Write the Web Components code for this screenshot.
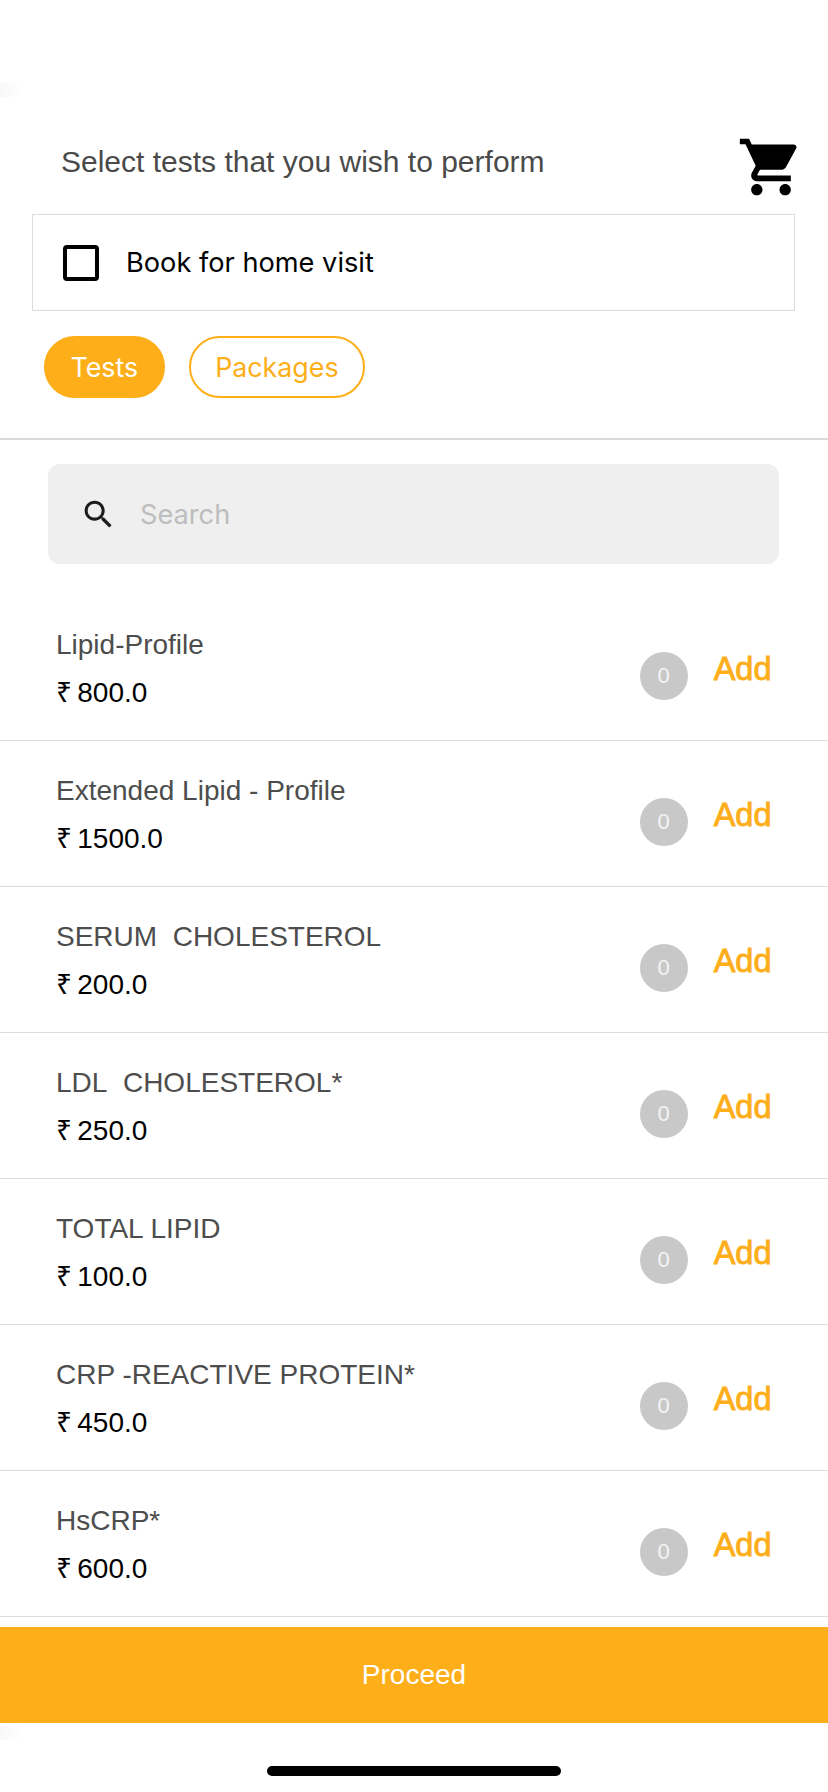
<!DOCTYPE html>
<html><head><meta charset="utf-8">
<style>
html,body{margin:0;padding:0;background:#fff}
body{width:828px;height:1792px;overflow:hidden;font-family:"Liberation Sans",Arial,sans-serif}
</style></head><body>
<app-screen>
  <select-header>Select tests that you wish to perform</select-header>
  <visit-check>Book for home visit</visit-check>
  <tab-bar>
    <tab-pill active>Tests</tab-pill>
    <tab-pill>Packages</tab-pill>
  </tab-bar>
  <search-box placeholder="Search"></search-box>
  <test-list>
    <test-row price="800.0">Lipid-Profile</test-row>
    <test-row price="1500.0">Extended Lipid - Profile</test-row>
    <test-row price="200.0">SERUM&nbsp; CHOLESTEROL</test-row>
    <test-row price="250.0">LDL&nbsp; CHOLESTEROL*</test-row>
    <test-row price="100.0">TOTAL LIPID</test-row>
    <test-row price="450.0">CRP -REACTIVE PROTEIN*</test-row>
    <test-row price="600.0">HsCRP*</test-row>
  </test-list>
  <proceed-bar>Proceed</proceed-bar>
</app-screen>
<script>
function def(name, css, html){
  customElements.define(name, class extends HTMLElement{
    constructor(){super();this.attachShadow({mode:'open'});}
    connectedCallback(){
      this.shadowRoot.innerHTML='<style>'+css+'</style>'+(typeof html==='function'?html(this):html);
    }
  });
}
def('app-screen',`
  :host{display:flex;flex-direction:column;width:828px;height:1792px;position:relative;background:#fff;overflow:hidden;padding-top:133px;box-sizing:border-box}
  .smudge{position:absolute;left:0;width:22px;height:14px;background:linear-gradient(90deg,#f8f8f8,#fff);border-radius:0 8px 8px 0}
  .a{top:83px}.b{top:1726px}
  .home{position:absolute;left:267px;top:1766px;width:294px;height:10px;border-radius:5px;background:#000}
`,`<div class="smudge a"></div><slot></slot><div class="smudge b"></div><div class="home"></div>`);

def('select-header',`
  :host{display:flex;align-items:center;justify-content:space-between;height:68px;padding:0 25px 0 61px;font-size:30px;color:#4a4a4a;margin-bottom:13px;box-sizing:border-box}
  .t{position:relative;top:-5.5px}
  svg{display:block;width:68px;height:68px;margin-right:-1.5px}
`,`<span class="t"><slot></slot></span>
<svg viewBox="0 0 24 24" aria-hidden="true"><path fill="#000" d="M7 18c-1.1 0-1.99.9-1.99 2S5.9 22 7 22s2-.9 2-2-.9-2-2-2zM1 2v2h2l3.6 7.59-1.35 2.45c-.16.28-.25.61-.25.96 0 1.1.9 2 2 2h12v-2H7.42c-.14 0-.25-.11-.25-.25l.03-.12.9-1.63h7.45c.75 0 1.41-.41 1.75-1.03l3.58-6.47c.08-.14.12-.31.12-.48 0-.55-.45-1-1-1H5.21l-.94-2H1zm16 16c-1.1 0-1.99.9-1.99 2s.89 2 1.99 2 2-.9 2-2-.9-2-2-2z"/></svg>`);

def('visit-check',`
  :host{display:flex;align-items:center;gap:27px;height:97px;margin:0 33px 0 32px;padding-left:30px;border:1.5px solid #dcdcdc;box-sizing:border-box;font-family:Inter,"Liberation Sans",sans-serif;font-size:27.2px;color:#000}
  .c{width:36px;height:36px;border:4px solid #000;border-radius:4px;box-sizing:border-box;flex:none}
`,`<span class="c"></span><span><slot></slot></span>`);

def('tab-bar',`
  :host{display:flex;gap:24px;padding:25px 0 40px 44px;border-bottom:2px solid #dadada;font-family:Inter,"Liberation Sans",sans-serif}
`,`<slot></slot>`);

def('tab-pill',`
  :host{display:flex;align-items:center;justify-content:center;height:62px;box-sizing:border-box;border-radius:31px;padding:0 24.5px;font-size:26.8px;color:#fdae19;border:2px solid #fdae19;background:#fff}
  :host([active]){background:#fdae19;color:#fff}
`,`<slot></slot>`);

def('search-box',`
  :host{display:flex;align-items:center;height:100px;margin:24px 49px 0 48px;padding-left:32px;box-sizing:border-box;background:#efefef;border-radius:12px;font-family:Inter,"Liberation Sans",sans-serif;font-size:27.2px;color:#bdbdbd}
  svg{width:37px;height:37px;flex:none;margin-right:23px}
`,el=>`<svg viewBox="0 0 24 24" aria-hidden="true"><path fill="#1c1c1c" d="M15.5 14h-.79l-.28-.27C15.41 12.59 16 11.11 16 9.5 16 5.91 13.09 3 9.5 3S3 5.91 3 9.5 5.91 16 9.5 16c1.61 0 3.09-.59 4.23-1.57l.27.28v.79l5 4.99L20.49 19l-4.99-5zm-6 0C7.01 14 5 11.99 5 9.5S7.01 5 9.5 5 14 7.01 14 9.5 11.99 14 9.5 14z"/></svg><span>${el.getAttribute('placeholder')}</span>`);

def('test-list',`
  :host{display:block;margin-top:31px}
`,`<slot></slot>`);

def('test-row',`
  :host{display:flex;align-items:flex-start;justify-content:space-between;height:146px;box-sizing:border-box;border-bottom:1.5px solid #dcdcdc;padding:0 56.5px 0 56px}
  .l{display:flex;flex-direction:column;padding-top:32px;font-size:28px}
  .n{color:#4d4d4d;height:48px;line-height:36px}
  .p{color:#000;line-height:36px;font-size:28px;word-spacing:-2.5px}
  .r{display:flex;padding-top:57px;gap:26px}
  .b{width:48px;height:48px;border-radius:50%;background:#c8c8c8;color:#f4f4f4;font-size:22px;display:flex;align-items:center;justify-content:center}
  .a{color:#fdae19;font-size:32.5px;line-height:32px;margin-top:1px;-webkit-text-stroke:.9px #fdae19}
`,el=>`<div class="l"><span class="n"><slot></slot></span><span class="p">₹ ${el.getAttribute('price')}</span></div><div class="r"><span class="b">0</span><span class="a">Add</span></div>`);

def('proceed-bar',`
  :host{display:flex;align-items:center;justify-content:center;height:96px;margin-top:10px;background:#fdae19;color:#fff;font-size:28px}
`,`<slot></slot>`);
</script>
</body></html>
